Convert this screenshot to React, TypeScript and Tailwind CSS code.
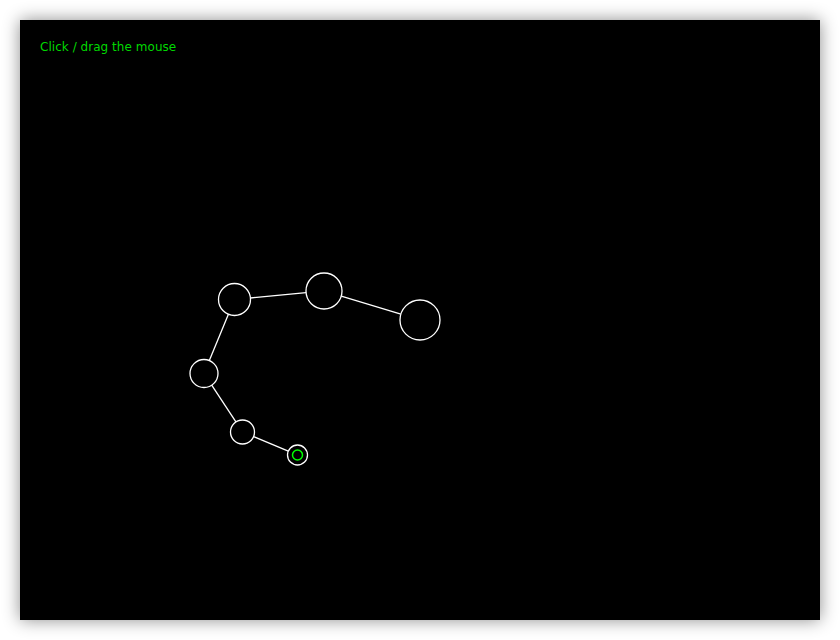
import React from "react";

const nodes = [
  { x: 420, y: 320, r: 20 },
  { x: 324, y: 291, r: 18 },
  { x: 234.5, y: 299.5, r: 16 },
  { x: 204, y: 373.5, r: 14 },
  { x: 242.5, y: 432, r: 12 },
  { x: 297.5, y: 455, r: 10 },
];

export default function App() {
  const lines = [];
  for (let i = 0; i < nodes.length - 1; i++) {
    const a = nodes[i];
    const b = nodes[i + 1];
    const dx = b.x - a.x;
    const dy = b.y - a.y;
    const d = Math.hypot(dx, dy);
    const ux = dx / d;
    const uy = dy / d;
    lines.push(
      <line
        key={"l" + i}
        x1={a.x + ux * a.r}
        y1={a.y + uy * a.r}
        x2={b.x - ux * b.r}
        y2={b.y - uy * b.r}
        stroke="white"
        strokeWidth={1.3}
      />
    );
  }
  return (
    <div className="min-h-[640px] w-[840px] bg-white p-5">
      <div className="relative h-[600px] w-[800px] bg-black shadow-[0_0_16px_rgba(0,0,0,0.45)]">
        <div
          className="absolute left-5 top-5 text-[12px] leading-[14px] tracking-[0.04px] text-[#00d800]"
          style={{ fontFamily: '"DejaVu Sans", sans-serif' }}
        >
          Click / drag the mouse
        </div>
        <svg width="800" height="600" viewBox="20 20 800 600" className="block">
          {lines}
          {nodes.map((n, i) => (
            <circle key={i} cx={n.x} cy={n.y} r={n.r} fill="none" stroke="white" strokeWidth={1.3} />
          ))}
          <circle cx={297.5} cy={455} r={5} fill="none" stroke="#00ff00" strokeWidth={1.5} />
        </svg>
      </div>
    </div>
  );
}
